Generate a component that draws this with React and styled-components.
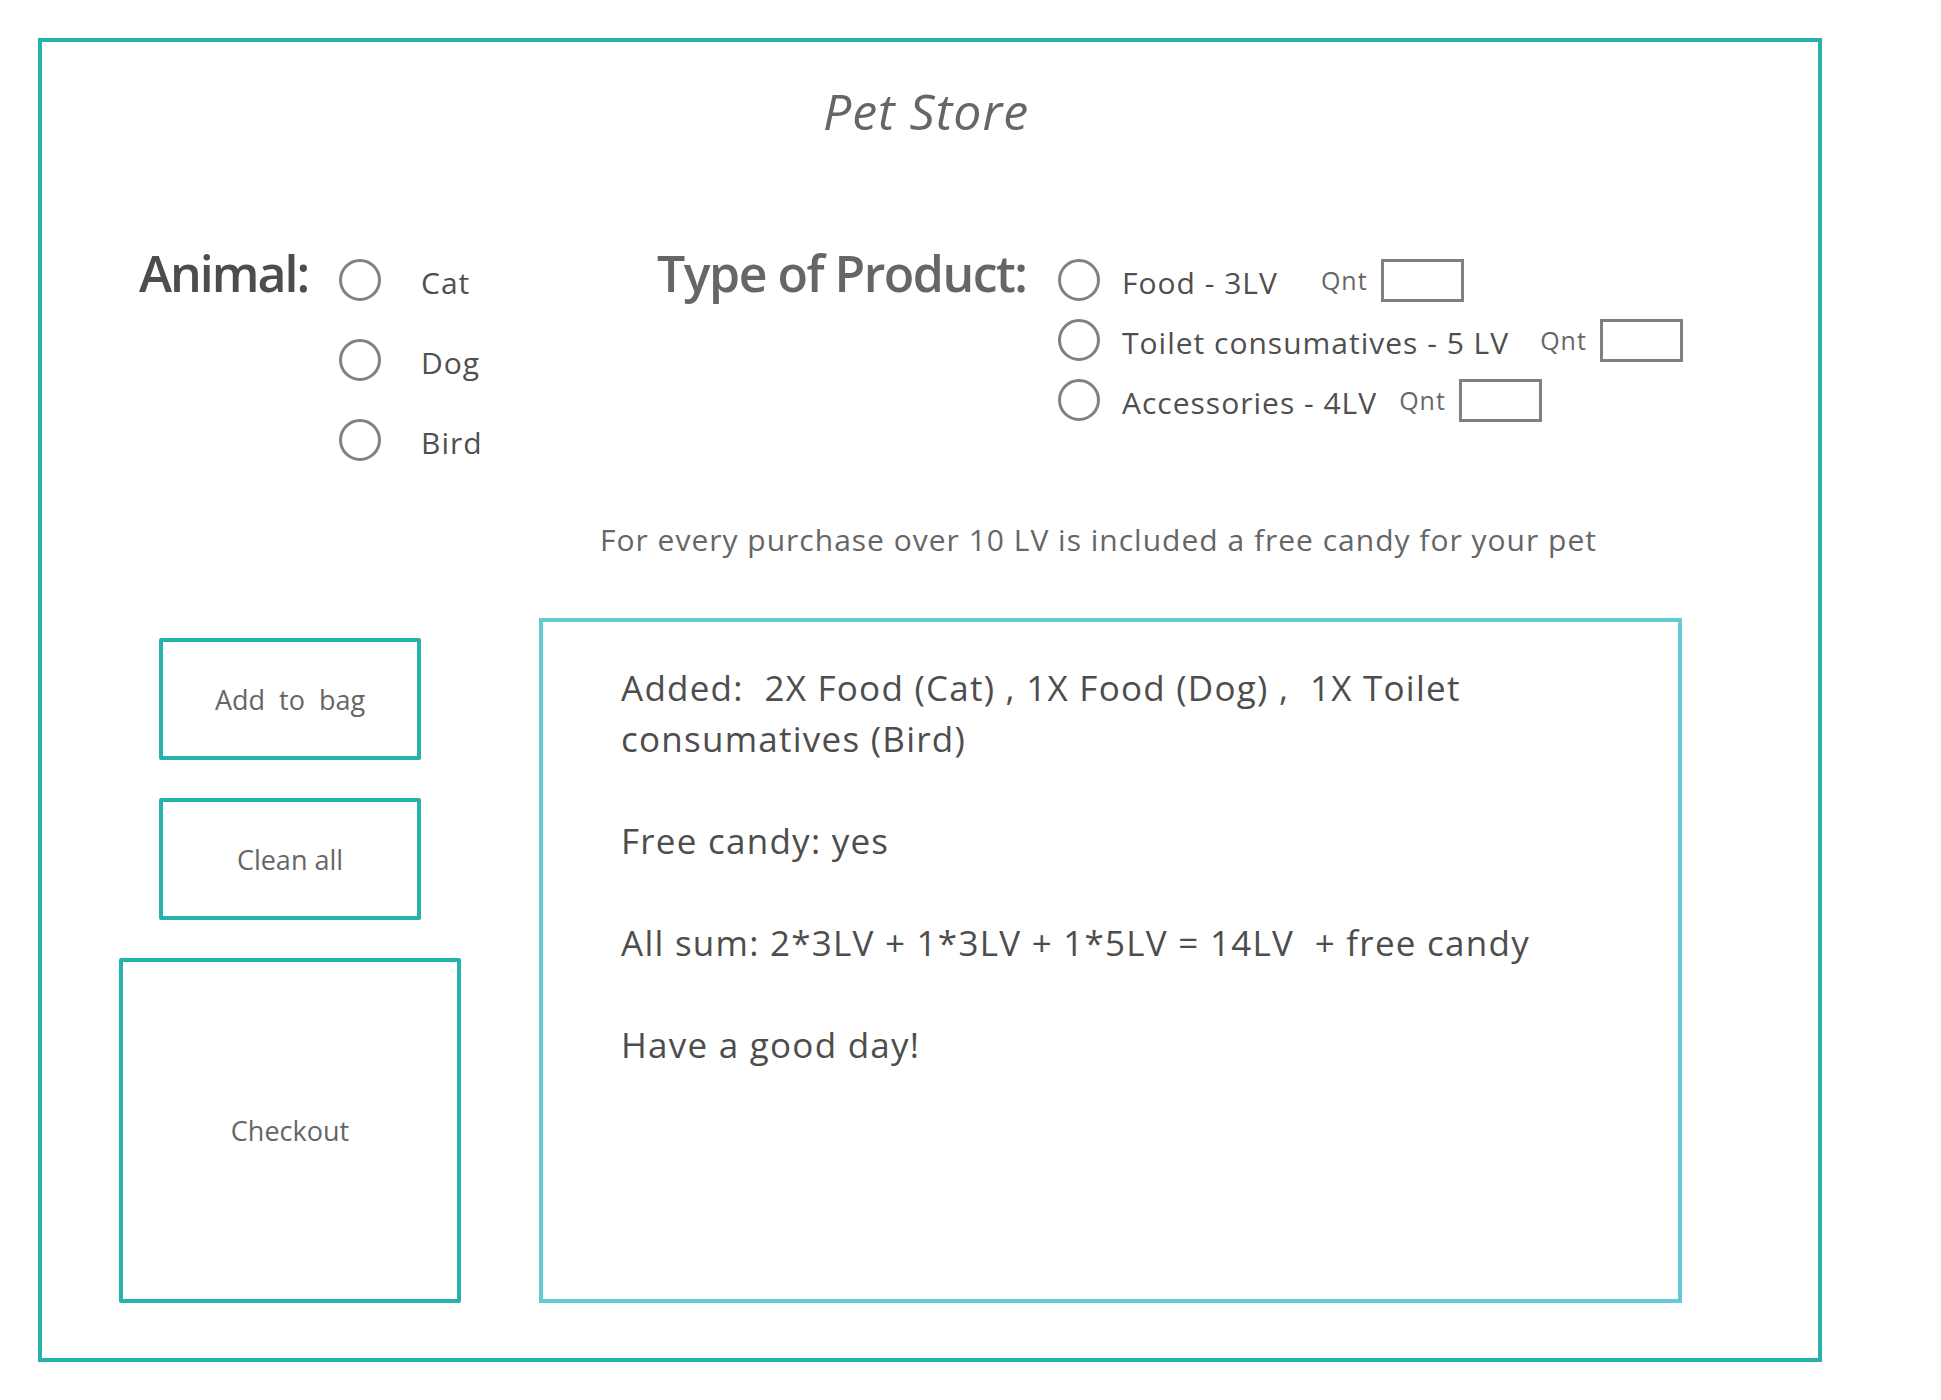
import styled, { createGlobalStyle } from "styled-components";

const GlobalStyle = createGlobalStyle`
  body {
    margin: 0;
    background: #fff;
    font-family: "Open Sans", "Noto Sans", sans-serif;
  }
`;

const Frame = styled.div`
  box-sizing: border-box;
  width: 1784px;
  height: 1324px;
  margin: 38px;
  border: 4px solid #27b0ac;
  display: flex;
  flex-direction: column;
`;

const Title = styled.h1`
  margin: 0;
  padding: 39px 8px 0 0;
  font-size: 50px;
  font-style: italic;
  font-weight: 400;
  line-height: 60px;
  letter-spacing: 1px;
  color: #666;
  text-align: center;
`;

const Options = styled.div`
  display: flex;
  align-items: flex-start;
  margin-top: 99px;
  padding-left: 97px;
`;

const Group = styled.div`
  display: flex;
  align-items: flex-start;
  width: ${(p) => p.$width}px;
  flex-shrink: 0;
`;

const Heading = styled.h2`
  margin: 0;
  width: ${(p) => p.$width}px;
  flex-shrink: 0;
  font-size: 50px;
  font-weight: 600;
  line-height: 66px;
  letter-spacing: ${(p) => p.$spacing}px;
  color: ${(p) => p.$color};
`;

const List = styled.div`
  display: flex;
  flex-direction: column;
  margin-top: ${(p) => p.$offset || 0}px;
`;

const Option = styled.label`
  display: flex;
  align-items: center;
  height: ${(p) => p.$height}px;
  font-size: 30px;
  letter-spacing: 1px;
  color: #4f4f4f;
  white-space: nowrap;
`;

const Radio = styled.span`
  box-sizing: border-box;
  width: 42px;
  height: 42px;
  border: 3px solid #808080;
  border-radius: 50%;
  flex-shrink: 0;
  margin-right: ${(p) => p.$gap}px;
`;

const OptionText = styled.span`
  padding-top: 4px;
`;

const Qnt = styled.span`
  margin-left: ${(p) => p.$offset}px;
  font-size: 25px;
  color: #666;
`;

const QntBox = styled.span`
  box-sizing: border-box;
  width: 83px;
  height: 43px;
  margin-left: 13px;
  border: 3px solid #808080;
`;

const Note = styled.p`
  margin: 40px 0 0;
  padding-left: 558px;
  font-size: 30px;
  line-height: 40px;
  letter-spacing: 1px;
  color: #666;
`;

const Bottom = styled.div`
  display: grid;
  grid-template-columns: 342px 1143px;
  column-gap: 78px;
  margin-top: 58px;
  padding-left: 77px;
`;

const Actions = styled.div`
  display: flex;
  flex-direction: column;
  align-items: center;
  gap: 38px;
  padding-top: 20px;
`;

const ActionButton = styled.button`
  box-sizing: border-box;
  width: ${(p) => p.$width}px;
  height: ${(p) => p.$height}px;
  padding: 0;
  border: 4px solid #27b0ac;
  border-radius: 2px;
  background: #fff;
  font-family: inherit;
  font-size: 27px;
  color: #666;
  white-space: pre;
`;

const Summary = styled.div`
  box-sizing: border-box;
  height: 685px;
  border: 4px solid #66c9d3;
  padding: 40px 0 0 78px;
  font-size: 35px;
  line-height: 51px;
  letter-spacing: 1.25px;
  color: #4d4d4d;
`;

const SummaryLine = styled.p`
  margin: 0 0 51px;
  max-width: 980px;
  white-space: pre-wrap;
`;

const animals = ["Cat", "Dog", "Bird"];

const products = [
  { name: "Food - 3LV", offset: 43 },
  { name: "Toilet consumatives - 5 LV", offset: 31 },
  { name: "Accessories - 4LV", offset: 22 },
];

const summary = [
  "Added:  2X Food (Cat) , 1X Food (Dog) ,  1X Toilet consumatives (Bird)",
  "Free candy: yes",
  "All sum: 2*3LV + 1*3LV + 1*5LV = 14LV  + free candy",
  "Have a good day!",
];

const App = () => {
  return (
    <>
      <GlobalStyle />
      <Frame>
        <Title>Pet Store</Title>

        <Options>
          <Group $width={518}>
            <Heading $width={200} $spacing={-2} $color="#4d4d4d">Animal:</Heading>
            <List>
              {animals.map((a) => (
                <Option key={a} $height={80}>
                  <Radio $gap={40} />
                  <OptionText>{a}</OptionText>
                </Option>
              ))}
            </List>
          </Group>

          <Group $width={1000}>
            <Heading $width={401} $spacing={-1.5} $color="#666">Type of Product:</Heading>
            <List $offset={10}>
              {products.map((p) => (
                <Option key={p.name} $height={60}>
                  <Radio $gap={22} />
                  <OptionText>{p.name}</OptionText>
                  <Qnt $offset={p.offset}>Qnt</Qnt>
                  <QntBox />
                </Option>
              ))}
            </List>
          </Group>
        </Options>

        <Note>For every purchase over 10 LV is included a free candy for your pet</Note>

        <Bottom>
          <Actions>
            <ActionButton $width={262} $height={122}>Add  to  bag</ActionButton>
            <ActionButton $width={262} $height={122}>Clean all</ActionButton>
            <ActionButton $width={342} $height={345}>Checkout</ActionButton>
          </Actions>

          <Summary>
            {summary.map((line) => (
              <SummaryLine key={line}>{line}</SummaryLine>
            ))}
          </Summary>
        </Bottom>
      </Frame>
    </>
  );
};

export default App;
